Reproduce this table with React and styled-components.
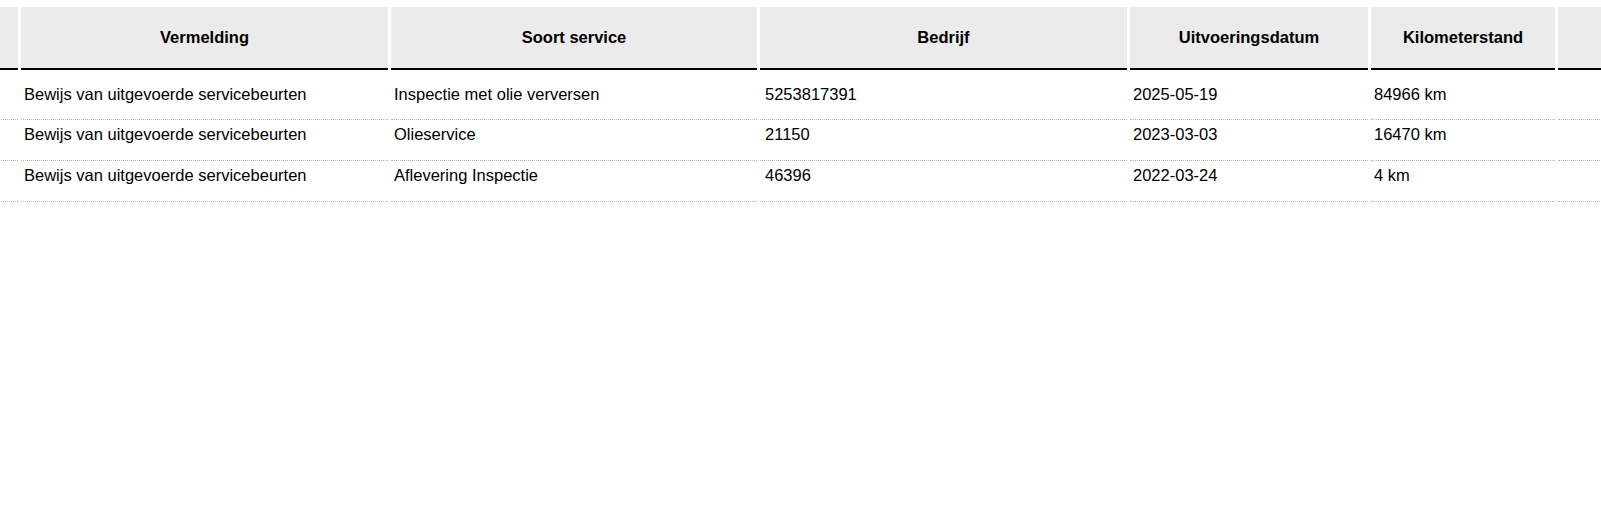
import React from 'react';
import styled, { createGlobalStyle } from 'styled-components';

const GlobalStyle = createGlobalStyle`
  * { box-sizing: border-box; }
  body {
    margin: 0;
    background: #fff;
    font-family: "Liberation Sans", Arial, sans-serif;
    color: #000;
  }
`;

const columns = [
  { title: '', width: 120 },
  { title: 'Vermelding', width: 367 },
  { title: 'Soort service', width: 366 },
  { title: 'Bedrijf', width: 367, pad: 5 },
  { title: 'Uitvoeringsdatum', width: 238 },
  { title: 'Kilometerstand', width: 184 },
  { title: '', width: 200 },
];

const rows = [
  ['', 'Bewijs van uitgevoerde servicebeurten', 'Inspectie met olie verversen', '5253817391', '2025-05-19', '84966 km', ''],
  ['', 'Bewijs van uitgevoerde servicebeurten', 'Olieservice', '21150', '2023-03-03', '16470 km', ''],
  ['', 'Bewijs van uitgevoerde servicebeurten', 'Aflevering Inspectie', '46396', '2022-03-24', '4 km', ''],
];

const Scroller = styled.div`
  width: 100%;
  overflow: hidden;
  padding-top: 7px;
`;

const Table = styled.table`
  border-collapse: separate;
  border-spacing: 3px 0;
  table-layout: fixed;
  width: 1866px;
  margin-left: -105px;
  font-size: 16.5px;
`;

const HeadCell = styled.th`
  height: 63px;
  padding: 0 4px;
  background: #ebebeb;
  border-bottom: 2px solid #000;
  font-weight: bold;
  text-align: center;
  vertical-align: middle;
  line-height: 19px;
`;

const Cell = styled.td`
  padding-top: ${p => (p.$first ? 15 : 5)}px;
  padding-bottom: ${p => (p.$first ? 15 : 16)}px;
  padding-left: ${p => p.$pad}px;
  padding-right: 4px;
  line-height: 19px;
  border-bottom: 1px dotted #b4b4b4;
  vertical-align: top;
  white-space: nowrap;
  overflow: hidden;
`;

export default function App() {
  return (
    <>
      <GlobalStyle />
      <Scroller>
        <Table>
          <colgroup>
            {columns.map((c, i) => (
              <col key={i} style={{ width: c.width }} />
            ))}
          </colgroup>
          <thead>
            <tr>
              {columns.map((c, i) => (
                <HeadCell key={i}>{c.title}</HeadCell>
              ))}
            </tr>
          </thead>
          <tbody>
            {rows.map((r, ri) => (
              <tr key={ri}>
                {r.map((v, ci) => (
                  <Cell key={ci} $first={ri === 0} $pad={columns[ci].pad || 3}>
                    {v}
                  </Cell>
                ))}
              </tr>
            ))}
          </tbody>
        </Table>
      </Scroller>
    </>
  );
}
